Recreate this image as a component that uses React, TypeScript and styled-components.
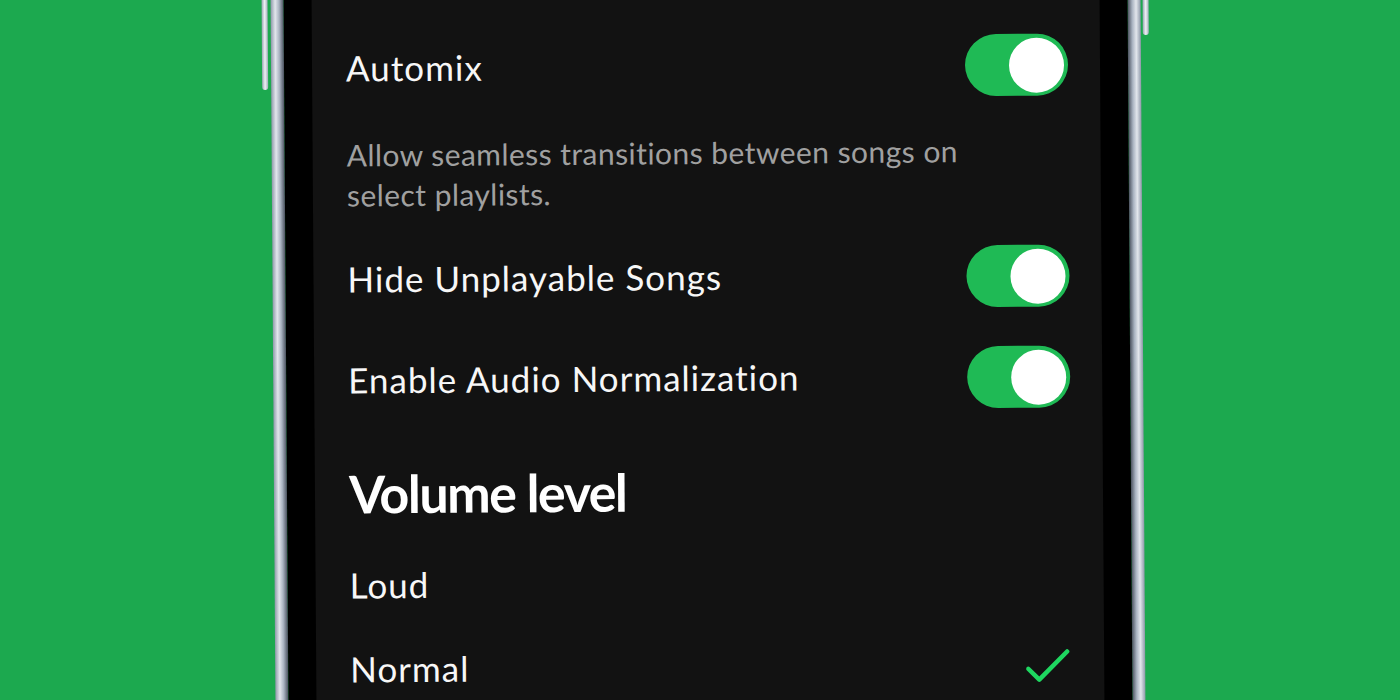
import React from 'react';
import styled, { createGlobalStyle } from 'styled-components';

const GlobalStyle = createGlobalStyle`
  html, body {
    margin: 0;
    padding: 0;
    background: #1ca94f;
  }
  body {
    font-family: Lato, "Open Sans", sans-serif;
    -webkit-font-smoothing: antialiased;
  }
`;

interface ToggleProps {
  on?: boolean;
}

const settings = [
  { label: 'Hide Unplayable Songs', on: true, gap: 35 },
  { label: 'Enable Audio Normalization', on: true, gap: 39 },
];

const levels = [
  { label: 'Loud', selected: false },
  { label: 'Normal', selected: true },
];

const Toggle = ({ on = true }: ToggleProps) => (
  <Track $on={on}>
    <Knob />
  </Track>
);

const Check = () => (
  <CheckIcon width="44" height="36" viewBox="0 0 44 36" fill="none">
    <polyline
      points="2,21 13,32 41,4"
      stroke="#1ed760"
      strokeWidth="4.5"
      strokeLinecap="round"
      strokeLinejoin="round"
    />
  </CheckIcon>
);

const App = () => {
  return (
    <Page>
      <GlobalStyle />
      <Phone>
        <Bezel>
          <Screen>
            <Row>
              <Label>Automix</Label>
              <Toggle on />
            </Row>
            <Description>
              Allow seamless transitions between songs on select playlists.
            </Description>
            {settings.map((s) => (
              <Row key={s.label} $gap={s.gap}>
                <Label>{s.label}</Label>
                <Toggle on={s.on} />
              </Row>
            ))}
            <Heading>Volume level</Heading>
            <Options>
              {levels.map((l) => (
                <Option key={l.label}>
                  <Label>{l.label}</Label>
                  {l.selected && <Check />}
                </Option>
              ))}
            </Options>
          </Screen>
        </Bezel>
      </Phone>
    </Page>
  );
};

export default App;

const Page = styled.div`
  height: 700px;
  overflow: hidden;
  display: flex;
  justify-content: center;
  align-items: flex-start;
  background: #1ca94f;
`;

const Phone = styled.div`
  position: relative;
  flex: none;
  margin: -30px 0 0 15px;
  height: 760px;
  padding: 0 13px;
  transform: rotate(-0.4deg);
  background:
    linear-gradient(90deg, #8e98a9 0%, #e2e6ec 35%, #a9b3c1 65%, #4a515e 100%) left / 13px 100% no-repeat,
    linear-gradient(270deg, #8e98a9 0%, #e2e6ec 35%, #a9b3c1 65%, #4a515e 100%) right / 13px 100% no-repeat;

  &::before,
  &::after {
    content: '';
    position: absolute;
    top: 0;
    width: 6px;
    border-radius: 0 0 3px 3px;
    background: linear-gradient(90deg, #9aa4b3, #eef1f5 50%, #a3adbb);
  }

  &::before {
    left: -9px;
    height: 117px;
  }

  &::after {
    right: -8px;
    height: 68px;
  }
`;

const Bezel = styled.div`
  height: 100%;
  padding: 0 28px;
  background: #000;
`;

const Screen = styled.div`
  width: 788px;
  height: 100%;
  box-sizing: border-box;
  padding: 66px 32px 0 34px;
  background: #121212;
  color: #fff;
`;

const Row = styled.div<{ $gap?: number }>`
  display: flex;
  align-items: center;
  justify-content: space-between;
  height: 62px;
  margin-top: ${(p) => p.$gap ?? 0}px;
`;

const Label = styled.span`
  margin-top: -4px;
  font-size: 35px;
  line-height: 42px;
  letter-spacing: 1px;
  color: #f7f7f7;
`;

const Description = styled.p`
  max-width: 660px;
  margin: 34px 0 0;
  font-size: 30px;
  line-height: 40px;
  letter-spacing: 0.45px;
  color: #a0a0a0;
`;

const Track = styled.div<{ $on: boolean }>`
  display: flex;
  align-items: center;
  justify-content: ${(p) => (p.$on ? 'flex-end' : 'flex-start')};
  width: 103px;
  height: 62px;
  padding: 0 4px;
  box-sizing: border-box;
  border-radius: 31px;
  background: ${(p) => (p.$on ? '#1fba55' : '#535353')};
`;

const Knob = styled.div`
  width: 55px;
  height: 55px;
  border-radius: 50%;
  background: #fff;
`;

const Heading = styled.h2`
  margin: 50px 0 0;
  font-size: 52px;
  line-height: 62px;
  font-weight: 700;
  letter-spacing: -1.5px;
  color: #fff;
`;

const Options = styled.div`
  display: flex;
  flex-direction: column;
  margin-top: 18px;
`;

const Option = styled.div`
  display: flex;
  align-items: center;
  justify-content: space-between;
  height: 84px;
  padding-right: 2px;

  ${Label} {
    margin-top: 0;
  }
`;

const CheckIcon = styled.svg`
  margin-top: 4px;
`;
